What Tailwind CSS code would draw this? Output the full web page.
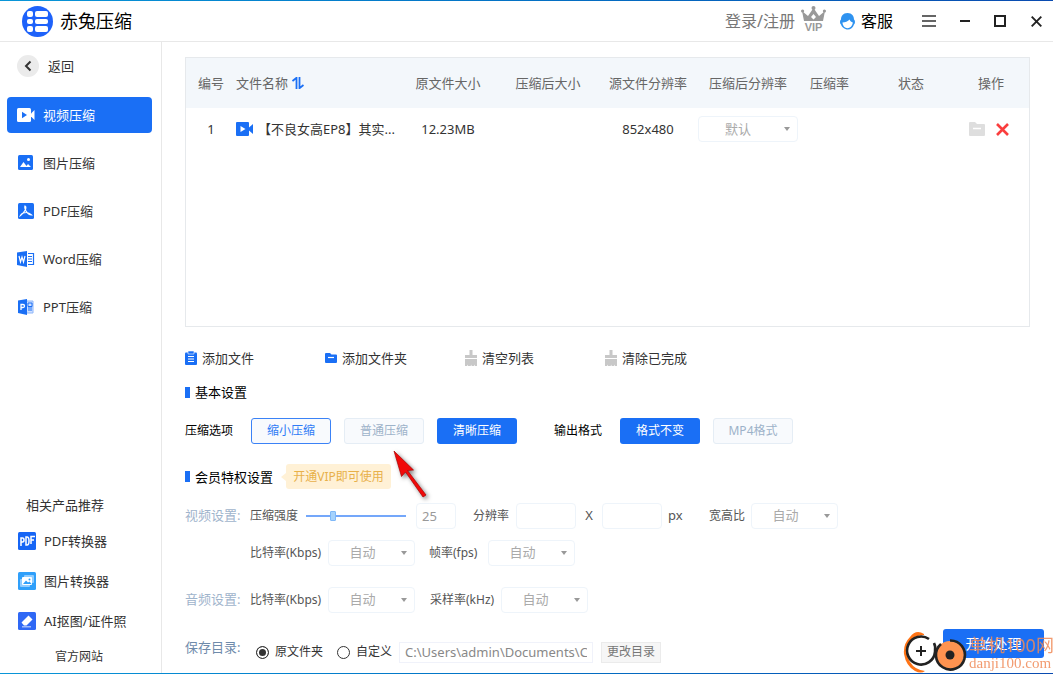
<!DOCTYPE html>
<html lang="zh-CN">
<head>
<meta charset="utf-8">
<meta name="viewport" content="width=device-width, initial-scale=1">
<title>赤兔压缩</title>
<script src="https://cdn.jsdelivr.net/npm/@tailwindcss/browser@4"></script>
</head>
<body class="flex min-h-screen flex-col bg-white font-['Noto_Sans','Noto_Sans_CJK_SC',sans-serif] text-[13px] leading-5 text-[#333]">
<div class="h-px bg-linear-to-r from-[#0a96d8] to-[#0a4bb0]"></div>

<header class="flex h-[41px] items-center border-b border-[#e8e8e8] pr-[11px] pl-[22px]">
  <svg class="size-[31px]" viewBox="0 0 31 31" aria-hidden="true">
    <circle cx="15.500" cy="15.500" r="15.500" fill="#1e62fa"/>
    <g fill="#fff"><rect x="5" y="5" width="6" height="6" rx="2"/><rect x="5" y="13" width="6" height="5" rx="2"/><rect x="5" y="20" width="6" height="6" rx="2"/><rect x="13" y="5" width="13" height="6" rx="2"/><rect x="13" y="13" width="13" height="5" rx="2"/><rect x="13" y="20" width="13" height="6" rx="2"/></g>
  </svg>
  <h1 class="ml-[7px] text-lg text-black">赤兔压缩</h1>
  <div class="ml-auto flex items-center">
    <a href="#" class="text-base text-[#777]">登录/注册</a>
    <svg class="mb-1 ml-1.5 h-[26px] w-[25px]" viewBox="0 0 25 26" aria-label="VIP" role="img">
      <g fill="#999"><circle cx="12.500" cy="2" r="2"/><circle cx="1.600" cy="5" r="1.600"/><circle cx="23.400" cy="5" r="1.600"/><path d="M1 5l6 5 5.500-8L18 10l6-5-2 10H3zM10 11l2.500 2.500L15 11l-2.500-3z" fill-rule="evenodd"/></g>
      <text x="12.500" y="25" text-anchor="middle" font-family="Liberation Sans" font-weight="700" font-size="11" fill="#999">VIP</text>
    </svg>
    <a href="#" class="ml-3.5 flex items-center gap-1.5 text-base text-black">
      <svg class="h-[17px] w-[15px]" viewBox="0 0 15 17" aria-hidden="true"><path d="M7.500 0C12 0 14 3 14 6.500c1.300 1 1.300 4 0 5C13 15 10.500 16.500 8 16.500S2 15 1 11.500c-1.300-1-1.300-4 0-5C1 3 3 0 7.500 0z" fill="#2f93f0"/><path d="M2.500 9.500C5 9.500 8 8.500 9.500 6.500c.5 1.500 2 2.500 3.300 3C12.500 13 10 15.200 7.500 15.200S2.600 13 2.500 9.500z" fill="#fff"/></svg>
      客服
    </a>
    <button aria-label="菜单" class="ml-7"><svg class="block h-3 w-[15px]" viewBox="0 0 15 12"><path d="M1 1h14M1 6h14M1 11h14" stroke="#333" stroke-width="1.400"/></svg></button>
    <button aria-label="最小化" class="ml-[23px]"><svg class="block size-3" viewBox="0 0 12 12"><path d="M1 6h10" stroke="#222" stroke-width="2"/></svg></button>
    <button aria-label="最大化" class="ml-[23px]"><svg class="block size-3" viewBox="0 0 12 12"><rect x="1" y="1" width="10" height="10" fill="none" stroke="#222" stroke-width="2"/></svg></button>
    <button aria-label="关闭" class="ml-[25px]"><svg class="block size-[11px]" viewBox="0 0 11 11"><path d="M.7.700l9.600 9.600M10.300.700L.7 10.300" stroke="#222" stroke-width="1.900"/></svg></button>
  </div>
</header>

<div class="flex flex-1">
  <aside class="flex w-[162px] shrink-0 flex-col border-r border-[#e8e8e8]">
    <a href="#" class="flex h-12 items-center gap-[9px] pl-[17px]">
      <svg class="size-[22px]" viewBox="0 0 22 22" aria-hidden="true"><circle cx="11" cy="11" r="11" fill="#ebebeb"/><path d="M13.500 6.500L9 11l4.500 4.500" fill="none" stroke="#333" stroke-width="2"/></svg>
      返回
    </a>
    <nav class="mt-[7px] flex flex-col gap-3 pr-[9px] pl-[7px]">
      <a href="#" class="flex h-9 items-center gap-2 rounded bg-[#1a6ff5] pl-2.5 text-white">
        <svg class="h-[18px] w-[18px]" viewBox="0 0 18 18" aria-hidden="true"><rect y="2" width="14" height="14" rx="1.500" fill="#fff"/><path d="M14 7.500l3.500-3.500v10L14 10.500z" fill="#fff"/><path d="M5 5.800l5 3.200-5 3.200z" fill="#1a6ff5"/></svg>
        视频压缩
      </a>
      <a href="#" class="flex h-9 items-center gap-2 pl-2.5">
        <svg class="size-[18px]" viewBox="0 0 18 18" aria-hidden="true"><rect x="1" y="1" width="15" height="15" rx="1.500" fill="#1a6ff5"/><circle cx="11.500" cy="5.500" r="1.500" fill="#fff"/><path d="M3 13l3.500-5 3 4 1.500-2 3 3z" fill="#fff"/></svg>
        图片压缩
      </a>
      <a href="#" class="flex h-9 items-center gap-2 pl-2.5">
        <svg class="size-[18px]" viewBox="0 0 18 18" aria-hidden="true"><rect x="1" y="1" width="16" height="16" rx="1.500" fill="#1a6ff5"/><path d="M8 4c2 1 .5 4-1.500 6.500C5 12.500 3.500 13.500 3.500 13.500c1-2 3.500-3 6-3s4 1.500 5 2.500c-2 0-4-1.500-5.500-4C8 7 7.500 5 8 4z" fill="none" stroke="#fff" stroke-width="1.200"/></svg>
        PDF压缩
      </a>
      <a href="#" class="flex h-9 items-center gap-2 pl-2.5">
        <svg class="size-[18px]" viewBox="0 0 18 18" aria-hidden="true"><path d="M0 2.500L10 1v16L0 15z" fill="#1a6ff5"/><path d="M11 3.500h5.500v11H11M11 6.500h4M11 9h4M11 11.500h4" fill="none" stroke="#1a6ff5" stroke-width="1.200"/><path d="M2 6l1.500 6L5 7l1.500 5L8 6" fill="none" stroke="#fff" stroke-width="1.200"/></svg>
        Word压缩
      </a>
      <a href="#" class="flex h-9 items-center gap-2 pl-2.5">
        <svg class="size-[18px]" viewBox="0 0 18 18" aria-hidden="true"><path d="M9 3h7v12H9z" fill="#cfe0ff" stroke="#8db6fa"/><path d="M11 5h4v3.500h-4zM11 10h4M11 12h4" fill="none" stroke="#1a6ff5"/><path d="M1 2.500L10 1v16L1 15z" fill="#1a6ff5"/><path d="M4 12V6.500h2q1.500 0 1.500 1.500T6 9.500H4" fill="none" stroke="#fff" stroke-width="1.300"/></svg>
        PPT压缩
      </a>
    </nav>
    <div class="mt-auto flex flex-col">
      <h2 class="flex h-8 items-center pl-[26px]">相关产品推荐</h2>
      <a href="#" class="flex h-10 items-center gap-2 pl-[18px]">
        <svg class="size-[18px]" viewBox="0 0 18 18" aria-hidden="true"><rect width="18" height="18" rx="1.500" fill="#1665f5"/><path d="M3 14V6h1.500q1.500 0 1.500 2t-1.500 2H3M8 13V5h1q2 0 2 4t-2 4zM13 12V4.500h4M13 8h3" fill="none" stroke="#fff" stroke-width="1.500"/></svg>
        PDF转换器
      </a>
      <a href="#" class="flex h-10 items-center gap-2 pl-[18px]">
        <svg class="size-[18px]" viewBox="0 0 18 18" aria-hidden="true"><rect width="18" height="18" rx="1.500" fill="#2f9ffa"/><rect x="6" y="3" width="10" height="8" rx="1" fill="#8fccff"/><rect x="2" y="7" width="10" height="8" rx="1" fill="#8fccff"/><rect x="4" y="5" width="10" height="8" rx="1" fill="#fff"/><path d="M5 12l3-3.500 2 2 1.500-1 2 2.500z" fill="#2f9ffa"/><circle cx="11.500" cy="7.500" r="1" fill="#2f9ffa"/></svg>
        图片转换器
      </a>
      <a href="#" class="flex h-10 items-center gap-2 pl-[18px]">
        <svg class="size-[18px]" viewBox="0 0 18 18" aria-hidden="true"><rect width="18" height="18" rx="1.500" fill="#2f68f5"/><path d="M10.500 3.500l4 4-6 6H6l-2.500-3z" fill="#fff"/><path d="M4 14.800h9" stroke="#b9cdfd" stroke-width="1.200"/></svg>
        AI抠图/证件照
      </a>
      <a href="#" class="flex h-8 items-center pl-[55px] text-xs">官方网站</a>
    </div>
  </aside>

  <main class="relative flex min-w-0 flex-1 flex-col pt-[15px] pr-[9px] pb-2 pl-[23px]">
    <section class="mr-3.5 min-h-[270px] flex-1 border border-[#e6e9ec]">
      <table class="w-full table-fixed text-center">
        <thead class="bg-[#f3f7fb] text-[#666]">
          <tr class="h-[50px]">
            <th class="w-[50px] font-normal">编号</th>
            <th class="text-left font-normal"><span class="flex items-center gap-1">文件名称
              <button aria-label="排序"><svg class="block h-3 w-3" viewBox="0 0 12 12"><path d="M.500 4L4.500 .8V12M7.500 0v11.200L11.500 8" fill="none" stroke="#1a6ff5" stroke-width="1.800"/></svg></button></span></th>
            <th class="w-[100px] font-normal">原文件大小</th>
            <th class="w-[100px] font-normal">压缩后大小</th>
            <th class="w-[100px] font-normal">源文件分辨率</th>
            <th class="w-[100px] font-normal">压缩后分辨率</th>
            <th class="w-[63px] font-normal">压缩率</th>
            <th class="w-[100px] font-normal">状态</th>
            <th class="w-[68px] pr-2 font-normal">操作</th>
          </tr>
        </thead>
        <tbody>
          <tr class="h-[42px]">
            <td>1</td>
            <td><span class="flex items-center gap-1">
              <svg class="size-[18px] shrink-0" viewBox="0 0 18 18" aria-hidden="true"><rect y="2" width="13" height="14" rx="1" fill="#1a6ff5"/><path d="M13 7.500l4-3.500v10l-4-3.500z" fill="#1a6ff5"/><path d="M4.500 6l5 3-5 3z" fill="#fff"/></svg>
              <span class="whitespace-nowrap">【不良女高EP8】其实...</span></span></td>
            <td>12.23MB</td>
            <td></td>
            <td>852x480</td>
            <td><span class="relative block">
              <select aria-label="压缩后分辨率" class="block h-[26px] w-full appearance-none rounded border border-[#eef4fa] bg-white pr-5 text-center text-[#aaa] [text-align-last:center]"><option>默认</option></select>
              <svg class="pointer-events-none absolute top-[11px] right-2 h-1 w-1.5" viewBox="0 0 6 4"><path d="M0 0h6L3 4z" fill="#999"/></svg></span></td>
            <td></td>
            <td></td>
            <td class="pr-3"><span class="flex items-center justify-center gap-[11px]">
              <button aria-label="打开文件夹"><svg class="block h-3.5 w-4" viewBox="0 0 16 14"><path d="M1 0h5l2 2h7q1 0 1 1v10q0 1-1 1H1q-1 0-1-1V1q0-1 1-1z" fill="#dedede"/><path d="M4 6.500h8" stroke="#fff" stroke-width="1.500"/></svg></button>
              <button aria-label="删除"><svg class="block h-[13px] w-[13px]" viewBox="0 0 13 13"><path d="M1 1l11 11M12 1L1 12" stroke="#fa3e3e" stroke-width="2.600"/></svg></button></span></td>
          </tr>
        </tbody>
      </table>
    </section>

    <div class="mt-[17px] flex h-7">
      <button class="flex w-[140px] items-center gap-[5px]"><svg class="h-3.5 w-3" viewBox="0 0 12 14"><path d="M1 1.500h10q1 0 1 1V13q0 1-1 1H1q-1 0-1-1V2.500q0-1 1-1z" fill="#1a6ff5"/><path d="M3 0h6v3H3z" fill="#1a6ff5" stroke="#fff" stroke-width=".6"/><path d="M3 5.500h6M3 8h6M3 10.500h6" stroke="#fff"/></svg>添加文件</button>
      <button class="flex w-[140px] items-center gap-[5px]"><svg class="h-3.5 w-3" viewBox="0 0 12 14"><path d="M1 2h4l1.500 1.500H11q1 0 1 1V11q0 1-1 1H1q-1 0-1-1V3q0-1 1-1z" fill="#1a6ff5"/><path d="M3 6.500h6" stroke="#fff" stroke-width="1.200"/></svg>添加文件夹</button>
      <button class="flex w-[140px] items-center gap-[5px]"><svg class="h-4 w-3" viewBox="0 0 12 16"><path d="M4.500 0h3v5H12v3H0V5h4.500zM0 9h12v7H10v-1.500L9 16H6.500v-1.500L5.500 16H3v-1.500L2 16H0z" fill="#c8c8c8"/></svg>清空列表</button>
      <button class="flex w-[140px] items-center gap-[5px]"><svg class="h-4 w-3" viewBox="0 0 12 16"><path d="M4.500 0h3v5H12v3H0V5h4.500zM0 9h12v7H10v-1.500L9 16H6.500v-1.500L5.500 16H3v-1.500L2 16H0z" fill="#c8c8c8"/></svg>清除已完成</button>
    </div>

    <h2 class="mt-2.5 flex h-5 items-center gap-[5px] text-black"><span class="h-[11px] w-[5px] bg-[#1a6ff5]"></span>基本设置</h2>

    <div class="mt-4 flex h-[26px] items-center text-xs">
      <span class="w-[66px] text-black">压缩选项</span>
      <button class="h-full w-20 rounded-[3px] border border-[#3b82f6] bg-[#f8fafd] text-[#2f7bf6]">缩小压缩</button>
      <button class="ml-[13px] h-full w-20 rounded-[3px] border border-[#e5edf5] bg-[#f8fafd] text-[#9db2c9]">普通压缩</button>
      <button class="ml-[13px] h-full w-20 rounded-[3px] bg-[#1a6ff5] text-white">清晰压缩</button>
      <span class="ml-[37px] w-[66px] text-black">输出格式</span>
      <button class="h-full w-20 rounded-[3px] bg-[#1a6ff5] text-white">格式不变</button>
      <button class="ml-[13px] h-full w-20 rounded-[3px] border border-[#e5edf5] bg-[#f8fafd] text-[#9db2c9]">MP4格式</button>
    </div>

    <div class="mt-5 flex h-[25px] items-center">
      <h2 class="flex items-center gap-[5px] text-black"><span class="h-[11px] w-[5px] bg-[#1a6ff5]"></span>会员特权设置</h2>
      <svg class="ml-2 h-2 w-[5px]" viewBox="0 0 5 8" aria-hidden="true"><path d="M5 0v8L0 4z" fill="#fff1d6"/></svg>
      <a href="#" class="flex h-full w-[105px] items-center justify-center rounded-[3px] bg-[#fff1d6] text-xs text-[#e8b04a]">开通VIP即可使用</a>
    </div>

    <div class="mt-3.5 flex h-[26px] items-center text-xs text-[#555]">
      <span class="w-[65px] text-[13px] text-[#9fb4cc]">视频设置:</span>
      <label for="strength" class="w-14">压缩强度</label>
      <input id="strength" type="range" min="0" max="100" value="25" class="h-3 w-[100px] appearance-none bg-transparent [&::-webkit-slider-runnable-track]:h-0.5 [&::-webkit-slider-runnable-track]:bg-[#74a7fa] [&::-webkit-slider-thumb]:-mt-1 [&::-webkit-slider-thumb]:h-2.5 [&::-webkit-slider-thumb]:w-1.5 [&::-webkit-slider-thumb]:appearance-none [&::-webkit-slider-thumb]:rounded-[1px] [&::-webkit-slider-thumb]:border [&::-webkit-slider-thumb]:border-solid [&::-webkit-slider-thumb]:border-[#7fb8f8] [&::-webkit-slider-thumb]:bg-[#a5d2fc]">
      <input aria-label="压缩强度数值" type="text" value="25" class="ml-2.5 h-full w-10 rounded border border-[#eef4fa] px-[5px] text-[13px] text-[#999]">
      <label for="rw" class="ml-[17px] w-[43px]">分辨率</label>
      <input id="rw" type="text" class="h-full w-15 rounded border border-[#eef4fa]">
      <span class="w-[26px] text-center text-[13px]">X</span>
      <input aria-label="分辨率高度" type="text" class="h-full w-15 rounded border border-[#eef4fa]">
      <span class="ml-1.5 w-[41px] text-[13px]">px</span>
      <label for="ratio" class="w-[42px]">宽高比</label>
      <span class="relative"><select id="ratio" class="block h-[26px] w-[87px] appearance-none rounded border border-[#eef4fa] bg-white pr-[18px] text-center text-[13px] text-[#aaa] [text-align-last:center]"><option>自动</option></select><svg class="pointer-events-none absolute top-[11px] right-2 h-1 w-1.5" viewBox="0 0 6 4"><path d="M0 0h6L3 4z" fill="#999"/></svg></span>
    </div>

    <div class="mt-[11px] flex h-[26px] items-center pl-[65px] text-xs text-[#555]">
      <label for="vbit" class="w-[78px]">比特率(Kbps)</label>
      <span class="relative"><select id="vbit" class="block h-[26px] w-[87px] appearance-none rounded border border-[#eef4fa] bg-white pr-[18px] text-center text-[13px] text-[#aaa] [text-align-last:center]"><option>自动</option></select><svg class="pointer-events-none absolute top-[11px] right-2 h-1 w-1.5" viewBox="0 0 6 4"><path d="M0 0h6L3 4z" fill="#999"/></svg></span>
      <label for="fps" class="ml-3.5 w-[59px]">帧率(fps)</label>
      <span class="relative"><select id="fps" class="block h-[26px] w-[87px] appearance-none rounded border border-[#eef4fa] bg-white pr-[18px] text-center text-[13px] text-[#aaa] [text-align-last:center]"><option>自动</option></select><svg class="pointer-events-none absolute top-[11px] right-2 h-1 w-1.5" viewBox="0 0 6 4"><path d="M0 0h6L3 4z" fill="#999"/></svg></span>
    </div>

    <div class="mt-[21px] flex h-[26px] items-center text-xs text-[#555]">
      <span class="w-[65px] text-[13px] text-[#9fb4cc]">音频设置:</span>
      <label for="abit" class="w-[78px]">比特率(Kbps)</label>
      <span class="relative"><select id="abit" class="block h-[26px] w-[87px] appearance-none rounded border border-[#eef4fa] bg-white pr-[18px] text-center text-[13px] text-[#aaa] [text-align-last:center]"><option>自动</option></select><svg class="pointer-events-none absolute top-[11px] right-2 h-1 w-1.5" viewBox="0 0 6 4"><path d="M0 0h6L3 4z" fill="#999"/></svg></span>
      <label for="khz" class="ml-[15px] w-[71px]">采样率(kHz)</label>
      <span class="relative"><select id="khz" class="block h-[26px] w-[87px] appearance-none rounded border border-[#eef4fa] bg-white pr-[18px] text-center text-[13px] text-[#aaa] [text-align-last:center]"><option>自动</option></select><svg class="pointer-events-none absolute top-[11px] right-2 h-1 w-1.5" viewBox="0 0 6 4"><path d="M0 0h6L3 4z" fill="#999"/></svg></span>
    </div>

    <div class="relative mt-4 flex h-9 justify-between">
      <div class="flex h-[26px] items-center self-end text-xs">
        <span class="w-[71px] self-start text-[13px] text-[#6f8bab]">保存目录:</span>
        <label class="flex items-center gap-1.5"><input type="radio" name="dir" checked class="size-[13px] appearance-none rounded-full border border-[#333] checked:bg-[#333] checked:shadow-[inset_0_0_0_2px_white]">原文件夹</label>
        <label class="ml-3.5 flex items-center gap-1.5"><input type="radio" name="dir" class="size-[13px] appearance-none rounded-full border border-[#333] checked:bg-[#333] checked:shadow-[inset_0_0_0_2px_white]">自定义</label>
        <input aria-label="保存目录路径" type="text" value="C:\Users\admin\Documents\CTCompress" class="ml-[7px] h-[21px] w-[194px] border border-[#f0f2fa] px-[5px] text-[13px] text-[#888]">
        <button class="ml-2 h-[21px] w-15 border border-[#ebebeb] bg-[#f6f6f6] text-[#777]">更改目录</button>
      </div>
      <button class="h-[29px] w-[101px] rounded-[3px] bg-[#1a6ff5] text-sm text-white">开始处理</button>
      <div class="pointer-events-none absolute top-0 -right-2 flex items-start">
        <svg class="mt-0.5 h-[43px] w-[66px]" viewBox="0 0 66 43" aria-hidden="true">
          <path d="M21 3Q13-2 7 6 0 13 1 23q2 12 11 17 6 3 10 0-10-1-15-9Q0 19 7 10 12 4 21 4z" fill="#ff7416"/>
          <path d="M26 8A14 14 0 1 0 32 21Q33 16 31 12" fill="none" stroke="#222" stroke-width="2.600"/>
          <path d="M13 20h10M18 15v10" stroke="#222" stroke-width="2"/>
          <circle cx="47" cy="24" r="14" fill="#ff9350"/><path d="M38 13A14.500 14.500 0 1 0 47 9.500" fill="none" stroke="#222" stroke-width="2.600"/><circle cx="47" cy="24" r="4.500" fill="#222"/>
        </svg>
        <div class="flex w-[83px] flex-col whitespace-nowrap text-[#f08a58] opacity-85">
          <span class="mt-1.5 text-lg leading-5">单机100网</span>
          <span class="font-['Liberation_Serif',serif] text-[15px] leading-4">danji100.com</span>
        </div>
      </div>
    </div>

    <svg class="pointer-events-none absolute top-[408px] left-[230px] h-[54px] w-[44px] drop-shadow-[2px_2px_2px_rgba(0,0,0,0.500)]" viewBox="0 0 44 54" aria-hidden="true"><path d="M2 1l19.500 19-6 .500L34 45l-3 2-17.500-25-4 4.500z" fill="#f00a0a" stroke="#a00" stroke-width=".7"/></svg>
  </main>
</div>
<div class="h-px bg-linear-to-r from-[#0a96d8] to-[#0a4bb0]"></div>
</body>
</html>
